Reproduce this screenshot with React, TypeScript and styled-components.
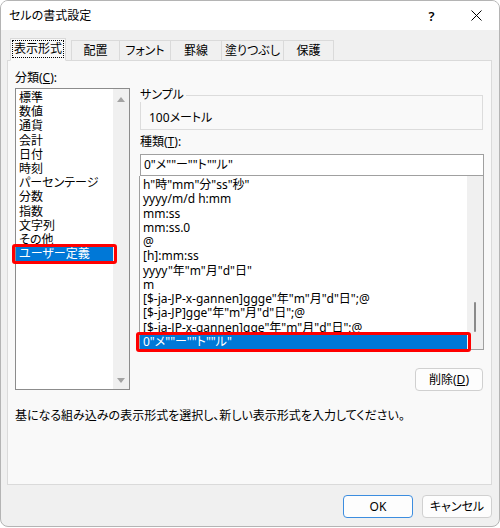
import React from "react";
import styled, { createGlobalStyle, css } from "styled-components";

const Global = createGlobalStyle`
  html, body { margin: 0; padding: 0; background: #ffffff; }
  body {
    font-family: "Noto Sans", "Noto Sans CJK JP", sans-serif;
    font-size: 12px;
    color: #000;
    font-feature-settings: "palt" 1;
  }
  * { box-sizing: border-box; }
`;

const Window = styled.div`
  width: 500px;
  height: 527px;
  border: 1px solid #b4b4b4;
  border-radius: 8px;
  overflow: hidden;
  display: flex;
  flex-direction: column;
  background: #f0f0f0;
`;

const TitleBar = styled.div`
  height: 29px;
  background: #ffffff;
  display: flex;
  align-items: center;
  padding-left: 8px;
  font-size: 12px;
  line-height: 14px;
`;

const Title = styled.div`
  flex: 1;
`;

const TitleButton = styled.div`
  width: 45px;
  height: 29px;
  display: flex;
  align-items: center;
  justify-content: center;
  font-size: 13px;
  font-weight: 600;
`;

const Body = styled.div`
  flex: 1;
  display: flex;
  flex-direction: column;
  padding: 8px 7px 0 6px;
`;

const TabStrip = styled.div`
  display: flex;
  align-items: flex-end;
  padding-left: 3px;
  margin-bottom: -1px;
  position: relative;
  z-index: 1;
`;

const Tab = styled.div<{ $w: number; $active?: boolean; $first?: boolean }>`
  width: ${(p) => p.$w}px;
  height: 21px;
  display: flex;
  align-items: center;
  justify-content: center;
  white-space: nowrap;
  background: #f0f0f0;
  border: 1px solid #dadada;
  border-left: ${(p) => (p.$first ? "1px solid #dadada" : "none")};
  line-height: 14px;
  ${(p) =>
    p.$active &&
    css`
      height: 23px;
      background: #f9f9f9;
      border-left: 1px solid #dadada;
      border-bottom-color: #f9f9f9;
      margin-right: 5px;
      padding-bottom: 2px;
    `}
`;

const Focus = styled.span`
  border: 1px dotted #000;
  padding: 1px 1px;
  line-height: 14px;
  white-space: nowrap;
`;

const Panel = styled.div`
  flex: 1;
  background: #f9f9f9;
  border: 1px solid #dadada;
  padding: 10px 7px 0 7px;
  display: flex;
  flex-direction: column;
`;

const Main = styled.div`
  display: flex;
  gap: 9px;
  align-items: flex-start;
`;

const LeftCol = styled.div`
  width: 115px;
  display: flex;
  flex-direction: column;
  gap: 3px;
`;

const Label = styled.div`
  line-height: 14px;
  height: 14px;
`;

const U = styled.span`
  text-decoration: underline;
`;

const CategoryBox = styled.div`
  height: 302px;
  background: #ffffff;
  border: 1px solid #8c8c8c;
  display: flex;
`;

const ItemList = styled.div<{ $pt: number }>`
  flex: 1;
  padding-top: ${(p) => p.$pt}px;
  display: flex;
  flex-direction: column;
`;

const Item = styled.div<{ $sel?: boolean; $lh: number }>`
  position: relative;
  height: ${(p) => p.$lh}px;
  line-height: ${(p) => p.$lh}px;
  padding-left: 3px;
  white-space: nowrap;
  ${(p) =>
    p.$sel &&
    css`
      background: #0078d7;
      color: #ffffff;
      &::after {
        content: "";
        position: absolute;
        left: -4px;
        right: -4px;
        top: -3px;
        bottom: -3px;
        border: 3px solid #ff0000;
        border-radius: 3px;
      }
    `}
`;

const ArrowBar = styled.div`
  width: 16px;
  background: #f0f0f0;
  display: flex;
  flex-direction: column;
  justify-content: space-between;
  align-items: center;
  padding: 8px 0 6px;
`;

const Arrow = styled.div<{ $down?: boolean }>`
  width: 0;
  height: 0;
  border-left: 4px solid transparent;
  border-right: 4px solid transparent;
  ${(p) =>
    p.$down
      ? css`border-top: 5px solid #a3a3a3;`
      : css`border-bottom: 5px solid #a3a3a3;`}
`;

const RightCol = styled.div`
  flex: 1;
  margin-top: 17px;
  display: flex;
  flex-direction: column;
`;

const GroupBox = styled.fieldset`
  margin: 0 1px;
  padding: 0 0 4px 0;
  border: 1px solid #dcdcdc;
  min-width: 0;
`;

const Legend = styled.legend`
  padding: 0 2px 0 0;
  margin-left: -1px;
  line-height: 14px;
`;

const SampleText = styled.div`
  margin: 9px 0 0 8px;
  line-height: 14px;
`;

const TypeLabel = styled(Label)`
  margin: 5px 0 5px 1px;
`;

const Input = styled.div`
  height: 22px;
  margin-left: 1px;
  background: #ffffff;
  border: 1px solid #a0a0a0;
  padding-left: 3px;
  display: flex;
  align-items: center;
  line-height: 14px;
`;

const TypeBox = styled.div`
  height: 174px;
  background: #ffffff;
  border: 1px solid #a0a0a0;
  border-top: none;
  display: flex;
`;

const ThinBar = styled.div`
  width: 16px;
  background: #f0f0f0;
  display: flex;
  justify-content: center;
  padding-top: 126px;
`;

const Thumb = styled.div`
  width: 2px;
  height: 30px;
  background: #8a8a8a;
  border-radius: 1px;
`;

const ButtonRow = styled.div`
  display: flex;
  justify-content: flex-end;
  margin-top: 18px;
  padding-right: 1px;
`;

const Button = styled.div<{ $default?: boolean; $w: number }>`
  width: ${(p) => p.$w}px;
  height: 23px;
  border: 1px solid ${(p) => (p.$default ? "#3c8ddf" : "#d0d0d0")};
  border-radius: 4px;
  background: #fdfdfd;
  display: flex;
  align-items: center;
  justify-content: center;
  line-height: 14px;
`;

const Description = styled.div`
  margin-top: 18px;
  line-height: 14px;
`;

const Footer = styled.div`
  display: flex;
  justify-content: flex-end;
  gap: 9px;
  padding: 10px 0 8px;
`;

const categories = [
  "標準",
  "数値",
  "通貨",
  "会計",
  "日付",
  "時刻",
  "パーセンテージ",
  "分数",
  "指数",
  "文字列",
  "その他",
  "ユーザー定義",
];

const types = [
  'h"時"mm"分"ss"秒"',
  "yyyy/m/d h:mm",
  "mm:ss",
  "mm:ss.0",
  "@",
  "[h]:mm:ss",
  'yyyy"年"m"月"d"日"',
  "m",
  '[$-ja-JP-x-gannen]ggge"年"m"月"d"日";@',
  '[$-ja-JP]gge"年"m"月"d"日";@',
  '[$-ja-JP-x-gannen]gge"年"m"月"d"日";@',
  '0"メ""ー""ト""ル"',
];

const tabs = [
  { label: "配置", w: 49 },
  { label: "フォント", w: 51 },
  { label: "罫線", w: 51 },
  { label: "塗りつぶし", w: 62 },
  { label: "保護", w: 50 },
];

export default function App() {
  return (
    <>
      <Global />
      <Window>
        <TitleBar>
          <Title>セルの書式設定</Title>
          <TitleButton>?</TitleButton>
          <TitleButton>
            <svg width="11" height="11" viewBox="0 0 11 11">
              <path d="M0.5 0.5 L10.5 10.5 M10.5 0.5 L0.5 10.5" stroke="#000" strokeWidth="1" fill="none" />
            </svg>
          </TitleButton>
        </TitleBar>
        <Body>
          <TabStrip>
            <Tab $w={56} $active>
              <Focus>表示形式</Focus>
            </Tab>
            {tabs.map((t, i) => (
              <Tab key={t.label} $w={t.w} $first={i === 0}>
                {t.label}
              </Tab>
            ))}
          </TabStrip>
          <Panel>
            <Main>
              <LeftCol>
                <Label>
                  分類(<U>C</U>):
                </Label>
                <CategoryBox>
                  <ItemList $pt={2}>
                    {categories.map((c, i) => (
                      <Item key={c} $lh={14.2} $sel={i === categories.length - 1}>
                        {c}
                      </Item>
                    ))}
                  </ItemList>
                  <ArrowBar>
                    <Arrow />
                    <Arrow $down />
                  </ArrowBar>
                </CategoryBox>
              </LeftCol>
              <RightCol>
                <GroupBox>
                  <Legend>サンプル</Legend>
                  <SampleText>100メートル</SampleText>
                </GroupBox>
                <TypeLabel>
                  種類(<U>T</U>):
                </TypeLabel>
                <Input>0"メ""ー""ト""ル"</Input>
                <TypeBox>
                  <ItemList $pt={2}>
                    {types.map((t, i) => (
                      <Item key={t} $lh={14.27} $sel={i === types.length - 1}>
                        {t}
                      </Item>
                    ))}
                  </ItemList>
                  <ThinBar>
                    <Thumb />
                  </ThinBar>
                </TypeBox>
                <ButtonRow>
                  <Button $w={68}>
                    削除(<U>D</U>)
                  </Button>
                </ButtonRow>
              </RightCol>
            </Main>
            <Description>
              基になる組み込みの表示形式を選択し、新しい表示形式を入力してください。
            </Description>
          </Panel>
          <Footer>
            <Button $w={70} $default>
              OK
            </Button>
            <Button $w={70}>キャンセル</Button>
          </Footer>
        </Body>
      </Window>
    </>
  );
}
